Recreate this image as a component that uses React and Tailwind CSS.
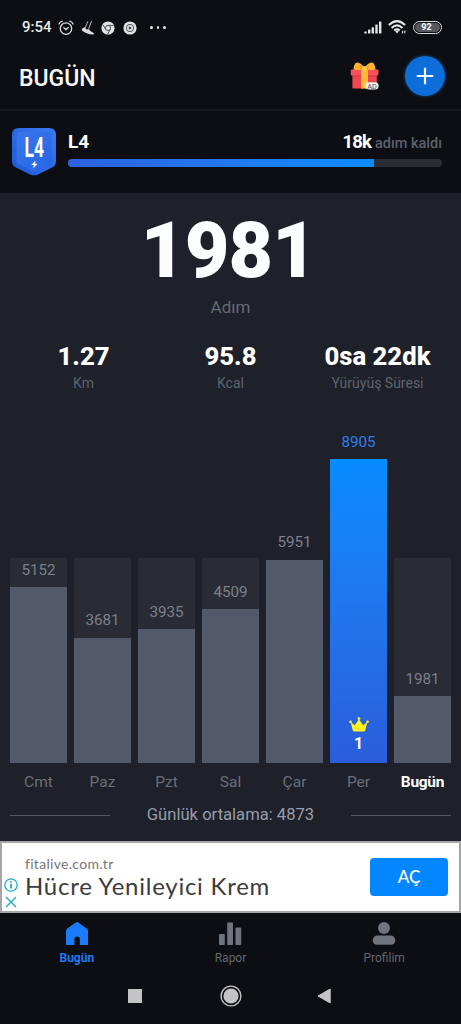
import React from "react";

const DAYS = [
  { day: "Cmt", steps: 5152, height: 175.5 },
  { day: "Paz", steps: 3681, height: 125 },
  { day: "Pzt", steps: 3935, height: 133.5 },
  { day: "Sal", steps: 4509, height: 153.5 },
  { day: "Çar", steps: 5951, height: 203 },
  { day: "Per", steps: 8905, height: 303.5, best: true },
  { day: "Bugün", steps: 1981, height: 66.5, today: true },
];

const STATS = [
  { value: "1.27", label: "Km" },
  { value: "95.8", label: "Kcal" },
  { value: "0sa 22dk", label: "Yürüyüş Süresi" },
];

function AlarmIcon() {
  return (
    <svg width="16" height="16" viewBox="0 0 16 16" fill="none" stroke="#dcdde0" strokeWidth="1.3" strokeLinecap="round">
      <circle cx="8" cy="8.6" r="5.7" />
      <path d="M1 4 Q2 1.8 4.2 1.2M15 4 Q14 1.8 11.8 1.2" />
      <path d="M5.8 7.8 8 9.6 10.4 7.6" />
    </svg>
  );
}

function ShoeIcon() {
  return (
    <svg width="14" height="16" viewBox="0 0 14 16" fill="none">
      <path d="M0.8 9 3.8 7 5.2 9.2 8 9.4 10 11.6 13 13.2 12.6 14.6 8.6 14.2 4 12.4 0.8 10.4Z" fill="#dcdde0" />
      <path d="M6.8 1.5 4.2 8M10.6 1.2 7.4 9.6" stroke="#b9bbc0" strokeWidth="1" />
    </svg>
  );
}

function ChromeIcon() {
  return (
    <svg width="14" height="14" viewBox="0 0 14 14" fill="none">
      <circle cx="7" cy="7" r="6.6" fill="#e2e3e5" />
      <circle cx="7" cy="7" r="2.6" stroke="#44464c" strokeWidth="0.9" />
      <path d="M7 4.4H12.6M4.7 8.3 2 3.8M9.3 8.3 6.6 13" stroke="#44464c" strokeWidth="0.9" />
    </svg>
  );
}

function PlayCircleIcon() {
  return (
    <svg width="14" height="14" viewBox="0 0 14 14" fill="none">
      <circle cx="7" cy="7" r="6.6" fill="#e2e3e5" />
      <circle cx="7" cy="7" r="3.7" stroke="#44464c" strokeWidth="0.9" />
      <path d="M5.9 5.2 8.9 7 5.9 8.8Z" fill="#33353b" />
    </svg>
  );
}

function SignalIcon() {
  return (
    <svg width="18" height="13" viewBox="0 0 18 13" fill="#e4e5e7">
      <rect x="0.3" y="10.6" width="2.4" height="2" rx="0.6" />
      <rect x="4" y="8.6" width="2.4" height="4" rx="0.6" />
      <rect x="7.6" y="6.2" width="2.4" height="6.4" rx="0.6" />
      <rect x="11.3" y="3.4" width="2.4" height="9.2" rx="0.6" />
      <rect x="15" y="0.4" width="2.4" height="12.2" rx="0.6" />
    </svg>
  );
}

function WifiIcon() {
  return (
    <svg width="19" height="15" viewBox="0 0 19 15" fill="none" stroke="#e4e5e7" strokeWidth="2">
      <path d="M0.9 5Q9 -2.8 17.1 5" />
      <path d="M3.6 7.9Q9 2.8 14.4 7.9" />
      <path d="M6.2 10.6Q9 8.2 11.8 10.6" />
      <path d="M7.2 11.3 9 13.4 10.8 11.3Q9 10.2 7.2 11.3Z" fill="#e4e5e7" stroke="none" />
      <path d="M14.6 10.8V13.6M16.8 10.4V13.2" strokeWidth="1.1" />
    </svg>
  );
}

function GiftIcon() {
  return (
    <svg width="30" height="28" viewBox="0 0 30 28">
      <path d="M2.4 12.5H26.8V26.5H2.4Z" fill="#f0474f" />
      <rect x="0.8" y="7.5" width="27.6" height="6" rx="1" fill="#fb5158" />
      <path d="M2.4 13.5H26.8V14.6H2.4Z" fill="#d23f48" />
      <rect x="11" y="8" width="7" height="18.5" fill="#fdbb3b" />
      <path d="M14.5 7.8C11 7.8 6.5 8.2 3.6 7.4 3.6 3.5 5.2 0.6 7.4 0.6 10.6 0.8 13 4 14.5 5.4 16 4 18.4 0.8 21.6 0.6 23.8 0.6 25.4 3.5 25.4 7.4 22.5 8.2 18 7.8 14.5 7.8Z" fill="#fdb32d" />
      <path d="M14.5 5.6 9.5 3.2 11.8 7.8H17.2L19.5 3.2Z" fill="#e89420" />
      <rect x="12" y="4.2" width="5" height="4.6" rx="1.4" fill="#ffc94d" />
      <rect x="15.4" y="20.2" width="13.2" height="7.4" rx="3.6" fill="#eceef0" />
      <text x="22" y="26.6" textAnchor="middle" fontSize="7.4" fontFamily="Roboto, sans-serif" fill="#55585f">AD</text>
    </svg>
  );
}

function LevelBadge() {
  return (
    <svg width="46" height="50" viewBox="0 0 46 50">
      <defs>
        <linearGradient id="badge" x1="0" y1="1" x2="1" y2="0">
          <stop offset="0" stopColor="#1d58da" />
          <stop offset="1" stopColor="#3b7cf0" />
        </linearGradient>
        <linearGradient id="badgeInner" x1="0" y1="0" x2="1" y2="1">
          <stop offset="0" stopColor="#3a77ec" />
          <stop offset="1" stopColor="#2565e6" />
        </linearGradient>
      </defs>
      <path d="M8 1H38Q45 1 45 8V34Q45 38 42 40L27 47.4Q23 49.2 19 47.4L4 40Q1 38 1 34V8Q1 1 8 1Z" fill="url(#badge)" />
      <path d="M10 5H36Q40.5 5 40.5 9.5V34Q40.5 36 38.5 37.2L25 44Q23 44.8 21 44L7.5 37.2Q5.5 36 5.5 34V9.5Q5.5 5 10 5Z" fill="url(#badgeInner)" />
      <text x="23.3" y="29.5" textAnchor="middle" textLength="19.5" lengthAdjust="spacingAndGlyphs" fontSize="27" fontWeight="700" fontFamily="Roboto, sans-serif" fill="#fff">L4</text>
      <path d="M24.6 33.4 20.2 38H22.8L22 41.4 26.6 36.8H24Z" fill="#fff" />
    </svg>
  );
}

function CrownIcon() {
  return (
    <svg width="20" height="15" viewBox="0 0 20 15" fill="#fff11a">
      <path d="M1.6 5 5.8 8.2 10 2.2 14.2 8.2 18.4 5 16.2 13.4Q15.9 14.4 14.8 14.4H5.2Q4.1 14.4 3.8 13.4Z" />
      <circle cx="1.5" cy="4.8" r="1.3" />
      <circle cx="10" cy="1.6" r="1.4" />
      <circle cx="18.5" cy="4.8" r="1.3" />
    </svg>
  );
}

function StatusBar() {
  return (
    <div className="flex h-[42px] items-center pt-[13px] pl-[22px]">
      <span className="w-[36px] text-[15px] leading-none font-medium text-[#e8e9eb]">9:54</span>
      <AlarmIcon />
      <div className="ml-[7px]"><ShoeIcon /></div>
      <div className="ml-[6px]"><ChromeIcon /></div>
      <div className="ml-[8px]"><PlayCircleIcon /></div>
      <div className="ml-[13px] flex gap-[4px]">
        <i className="size-[2.5px] rounded-full bg-[#e4e5e7]" />
        <i className="size-[2.5px] rounded-full bg-[#e4e5e7]" />
        <i className="size-[2.5px] rounded-full bg-[#e4e5e7]" />
      </div>
      <div className="mr-[19px] ml-auto flex items-center">
        <SignalIcon />
        <div className="ml-[6px]"><WifiIcon /></div>
        <div className="ml-[6px] flex h-[13px] w-[29px] items-center justify-center rounded-full border-[1.5px] border-[#dfe0e2] p-[1px]">
          <span className="flex h-full w-full items-center justify-center rounded-full bg-[#55575d] pr-[2px] text-[9px] leading-none font-bold text-white">92</span>
        </div>
      </div>
    </div>
  );
}

function Header() {
  return (
    <header className="flex h-[67px] items-center pr-[16px] pl-[19px]">
      <h1 className="pt-[5px] text-[23px] leading-none font-medium text-[#fafbfd]">BUGÜN</h1>
      <div className="ml-auto pt-px"><GiftIcon /></div>
      <button className="ml-[25px] flex size-[40px] items-center justify-center rounded-full bg-[#0d6edb] shadow-[0_0_0_2px_#0f2033]">
        <svg width="18" height="18" viewBox="0 0 18 18" stroke="#f2f6fc" strokeWidth="2.2">
          <path d="M9 0.8V17.2M0.8 9H17.2" />
        </svg>
      </button>
    </header>
  );
}

function LevelProgress() {
  return (
    <section className="flex h-[84px] border-t-2 border-[#181a1f] pt-[16px] pr-[19px] pl-[11px]">
      <LevelBadge />
      <div className="ml-[11px] flex-1 pt-[5px]">
        <div className="flex h-[20px] items-baseline justify-between text-[19px] leading-[20px] font-bold text-white">
          <span>L4</span>
          <span className="text-[18.5px] tracking-[-0.9px]">
            18k<span className="ml-[4px] text-[14.5px] font-medium tracking-normal text-[#5d616c]">adım kaldı</span>
          </span>
        </div>
        <div className="mt-[7px] h-[8px] overflow-hidden rounded-full bg-[#2b2d35]">
          <div className="h-full w-[306px] bg-linear-to-r from-[#2c62e0] to-[#0a8cff]" />
        </div>
      </div>
    </section>
  );
}

function StepSummary() {
  return (
    <section className="h-[206px] text-center">
      <div className="pt-[18px] pr-[4px] text-[77px] leading-[80px] font-black tracking-[-0.8px] text-[#fcfdff]">1981</div>
      <div className="mt-[6px] text-[17px] leading-[20px] text-[#666a74]">Adım</div>
      <div className="mt-[25px] grid grid-cols-[147px_147px_147px] justify-center">
        {STATS.map((s) => (
          <div key={s.label}>
            <div className="text-[25.7px] leading-[28px] font-extrabold whitespace-nowrap text-white">{s.value}</div>
            <div className="mt-[4px] text-[14px] leading-[18px] text-[#5f636e]">{s.label}</div>
          </div>
        ))}
      </div>
    </section>
  );
}

function DayBar({ day, steps, height, best, today }) {
  return (
    <div className="flex w-[57px] flex-col items-center">
      <div className={"flex h-[363.5px] w-full flex-col items-center justify-end " + (best || steps > 5900 ? "" : "bg-[linear-gradient(to_top,#292c35_205px,transparent_205px)]")}>
        <span className={"mb-[8.5px] text-[15.2px] leading-[18px] " + (best ? "text-[#2d7ff0]" : "text-[#7c808b]")}>{steps}</span>
        <div
          className={"flex w-full shrink-0 flex-col items-center justify-end " + (best ? "bg-linear-to-b from-[#068cff] to-[#2a5ddb]" : "bg-[#525969]")}
          style={{ height }}
        >
          {best && (
            <>
              <CrownIcon />
              <span className="mt-[4px] mb-[11px] text-[16px] leading-[16px] font-bold text-white">1</span>
            </>
          )}
        </div>
      </div>
      <span className={"mt-[9px] text-[15.5px] leading-[20px] " + (today ? "font-bold tracking-[-0.3px] text-white" : "text-[#6b6f7a]")}>{day}</span>
    </div>
  );
}

function WeekChart() {
  return (
    <section className="h-[442px]">
      <div className="flex justify-center gap-[7px]">
        {DAYS.map((d) => (
          <DayBar key={d.day} {...d} />
        ))}
      </div>
      <div className="mt-[12.5px] flex h-[22px] items-center justify-between px-[10px]">
        <i className="h-px w-[100px] bg-[#565a64]" />
        <span className="text-[16.6px] leading-[22px] text-[#969dac]">Günlük ortalama: 4873</span>
        <i className="h-px w-[100px] bg-[#565a64]" />
      </div>
    </section>
  );
}

function AdBanner() {
  return (
    <aside className="flex h-[72px] items-center border-2 border-[#a6a6a6] bg-white pr-[11px] font-[Lato,sans-serif]">
      <div className="flex w-[17px] flex-col items-center gap-[4px] pt-[32px]">
        <svg width="14" height="14" viewBox="0 0 14 14" fill="none" stroke="#20a9c2" strokeWidth="1.3">
          <circle cx="7" cy="7" r="6.2" />
          <path d="M7 6V10.6M7 3.2V4.8" strokeWidth="1.8" />
        </svg>
        <svg width="12" height="12" viewBox="0 0 12 12" stroke="#20a9c2" strokeWidth="1.4">
          <path d="M1 1 11 11M11 1 1 11" />
        </svg>
      </div>
      <div className="pl-[6px]">
        <div className="text-[14px] leading-[18px] tracking-[0.3px] text-[#757575]">fitalive.com.tr</div>
        <div className="-mt-px text-[24px] leading-[28px] tracking-[0.75px] whitespace-nowrap text-[#3c3c3c]">Hücre Yenileyici Krem</div>
      </div>
      <button className="ml-auto h-[38px] w-[78px] rounded-[4px] bg-[#0486ff] pb-px text-[17px] leading-none font-medium text-white">AÇ</button>
    </aside>
  );
}

function TabBar() {
  return (
    <nav className="grid h-[55px] grid-cols-3 pt-[9px] text-center text-[12px] leading-[14px] text-[#62666f]">
      <div className="flex flex-col items-center gap-[6px] font-bold text-[#1f7cf2]">
        <svg width="24" height="23" viewBox="0 0 24 23" fill="#1a7cfa">
          <path d="M10.8 0.6Q12 -0.2 13.2 0.6L22 6.8Q23 7.6 23 8.8V23H14.8V17Q14.8 14.4 12.1 14.4 9.4 14.4 9.4 17V23H1V8.8Q1 7.6 2 6.8Z" />
        </svg>
        Bugün
      </div>
      <div className="flex flex-col items-center gap-[6px]">
        <svg width="24" height="23" viewBox="0 0 24 23" fill="#70747f">
          <rect x="1" y="12" width="5.8" height="11" rx="1" />
          <rect x="9.2" y="0.5" width="5.8" height="22.5" rx="1" />
          <rect x="17.4" y="5.6" width="5.8" height="17.4" rx="1" />
        </svg>
        Rapor
      </div>
      <div className="flex flex-col items-center gap-[6px]">
        <svg width="24" height="23" viewBox="0 0 24 23" fill="#70747f">
          <circle cx="12" cy="6" r="6" />
          <rect x="0.7" y="13.6" width="22.6" height="9.2" rx="4.6" />
        </svg>
        Profilim
      </div>
    </nav>
  );
}

function SystemNav() {
  return (
    <div className="flex h-[56px] items-center pl-[128px]">
      <i className="size-[14px] bg-[#c4c4c6]" />
      <svg className="ml-[77.5px]" width="22" height="22" viewBox="0 0 22 22">
        <circle cx="11" cy="11" r="9.9" fill="none" stroke="#c4c4c6" strokeWidth="1.4" />
        <circle cx="11" cy="11" r="7.6" fill="#c4c4c6" />
      </svg>
      <svg className="ml-[75px]" width="15" height="16" viewBox="0 0 15 16">
        <path d="M1 8 13.2 1V15Z" fill="#c4c4c6" stroke="#c4c4c6" strokeLinejoin="round" />
      </svg>
    </div>
  );
}

export default function App() {
  return (
    <div className="flex h-[1024px] w-[461px] flex-col overflow-hidden bg-[#0d0e13] font-[Roboto,sans-serif]">
      <StatusBar />
      <Header />
      <LevelProgress />
      <main className="bg-[#1e2129]">
        <StepSummary />
        <WeekChart />
      </main>
      <AdBanner />
      <TabBar />
      <SystemNav />
    </div>
  );
}
